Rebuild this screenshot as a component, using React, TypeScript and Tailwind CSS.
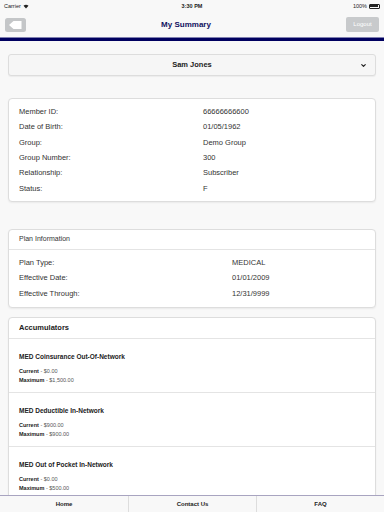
import { ChevronDown } from 'lucide-react';

const member = [
  ['Member ID:', '66666666600'],
  ['Date of Birth:', '01/05/1962'],
  ['Group:', 'Demo Group'],
  ['Group Number:', '300'],
  ['Relationship:', 'Subscriber'],
  ['Status:', 'F'],
];

const plan = [
  ['Plan Type:', 'MEDICAL'],
  ['Effective Date:', '01/01/2009'],
  ['Effective Through:', '12/31/9999'],
];

const accumulators = [
  { name: 'MED Coinsurance Out-Of-Network', current: '$0.00', max: '$1,500.00' },
  { name: 'MED Deductible In-Network', current: '$900.00', max: '$900.00' },
  { name: 'MED Out of Pocket In-Network', current: '$0.00', max: '$500.00' },
];

function StatusBar() {
  return (
    <div className="h-[12px] flex items-center justify-between px-[4px] text-[5.5px] text-[#222]">
      <div className="flex items-center gap-[2px] w-[60px]">
        <span>Carrier</span>
        <svg width="6" height="5" viewBox="0 0 12 10">
          <path d="M1 3.5 Q6 -1 11 3.5 L6 9 Z" fill="#222" />
        </svg>
      </div>
      <span className="font-semibold">3:30 PM</span>
      <div className="flex items-center justify-end gap-[2px] w-[60px]">
        <span>100%</span>
        <div className="w-[11px] h-[5px] border border-[#222] rounded-[1px] p-[0.5px] flex">
          <div className="flex-1 bg-[#222]" />
        </div>
      </div>
    </div>
  );
}

function NavBar() {
  return (
    <div className="h-[25px] flex items-center justify-between px-[5px]">
      <svg width="21" height="14" viewBox="0 0 21 14">
        <rect x="0" y="0" width="21" height="14" rx="2.5" fill="#c4c6c8" />
        <path d="M4 7 L8.5 3 H16.5 V11 H8.5 Z" fill="#ffffff" />
      </svg>
      <span className="text-[8px] font-bold text-[#101060]">My Summary</span>
      <div className="w-[33px] h-[15px] rounded-[2px] bg-[#c8cacc] flex items-center justify-center text-[6px] text-white">
        Logout
      </div>
    </div>
  );
}

function Row({ label, value, valueX }: { label: string; value: string; valueX: string }) {
  return (
    <div className="h-[15.3px] flex items-center text-[7.5px] text-[#333]">
      <span className="pl-[10px]">{label}</span>
      <span className={`absolute ${valueX}`}>{value}</span>
    </div>
  );
}

export default function App() {
  return (
    <div
      className="w-[384px] h-[512px] bg-[#f8f8f8] overflow-hidden relative flex flex-col"
      style={{ fontFamily: '"Liberation Sans", Arial, sans-serif' }}
    >
      <div className="bg-[#f8f8f8]">
        <StatusBar />
        <NavBar />
      </div>
      <div className="h-[4px] bg-[#000060] border-t border-[#8080b0]" />

      <div className="px-[8px] pt-[13px] flex flex-col">
        <div className="h-[22px] rounded-[3px] border border-[#dddddd] bg-[#f6f6f6] flex items-center justify-center relative shadow-[0_1px_1px_rgba(0,0,0,0.05)]">
          <span className="text-[7.5px] font-bold text-[#222]">Sam Jones</span>
          <ChevronDown className="absolute right-[8px] w-[7px] h-[7px] text-[#222]" strokeWidth={4} />
        </div>

        <div className="mt-[22px] h-[104px] rounded-[4px] border border-[#dddddd] bg-white pt-[5px] relative shadow-[0_1px_2px_rgba(0,0,0,0.06)]">
          {member.map(([l, v]) => (
            <Row key={l} label={l} value={v} valueX="left-[194px]" />
          ))}
        </div>

        <div className="mt-[27px] h-[79px] rounded-[4px] border border-[#dddddd] bg-white relative shadow-[0_1px_2px_rgba(0,0,0,0.06)]">
          <div className="h-[20px] border-b border-[#e4e4e4] flex items-center pl-[10px] text-[7px] text-[#333]">
            Plan Information
          </div>
          <div className="pt-[5px]">
            {plan.map(([l, v]) => (
              <Row key={l} label={l} value={v} valueX="left-[223px]" />
            ))}
          </div>
        </div>

        <div className="mt-[9px] rounded-[4px] border border-[#dddddd] bg-white shadow-[0_1px_2px_rgba(0,0,0,0.06)]">
          <div className="h-[21px] border-b border-[#e4e4e4] flex items-center pl-[10px] text-[7.5px] font-bold text-[#222]">
            Accumulators
          </div>
          {accumulators.map((a) => (
            <div key={a.name} className="h-[54px] border-b border-[#e4e4e4] pl-[10px] pt-[14px]">
              <div className="text-[6.5px] font-bold text-[#222] leading-[8px]">{a.name}</div>
              <div className="mt-[6px] text-[5.5px] leading-[9px] text-[#555]">
                <div>
                  <span className="font-bold text-[#222]">Current</span> - {a.current}
                </div>
                <div>
                  <span className="font-bold text-[#222]">Maximum</span> - {a.max}
                </div>
              </div>
            </div>
          ))}
        </div>
      </div>

      <div className="absolute bottom-0 left-0 right-0 h-[17px] bg-[#f8f8f8] border-t border-[#a8a4c0] grid grid-cols-3 text-[6px] font-semibold text-[#222]">
        <div className="flex items-center justify-center">Home</div>
        <div className="flex items-center justify-center border-l border-[#dddddd]">Contact Us</div>
        <div className="flex items-center justify-center border-l border-[#dddddd]">FAQ</div>
      </div>
    </div>
  );
}
